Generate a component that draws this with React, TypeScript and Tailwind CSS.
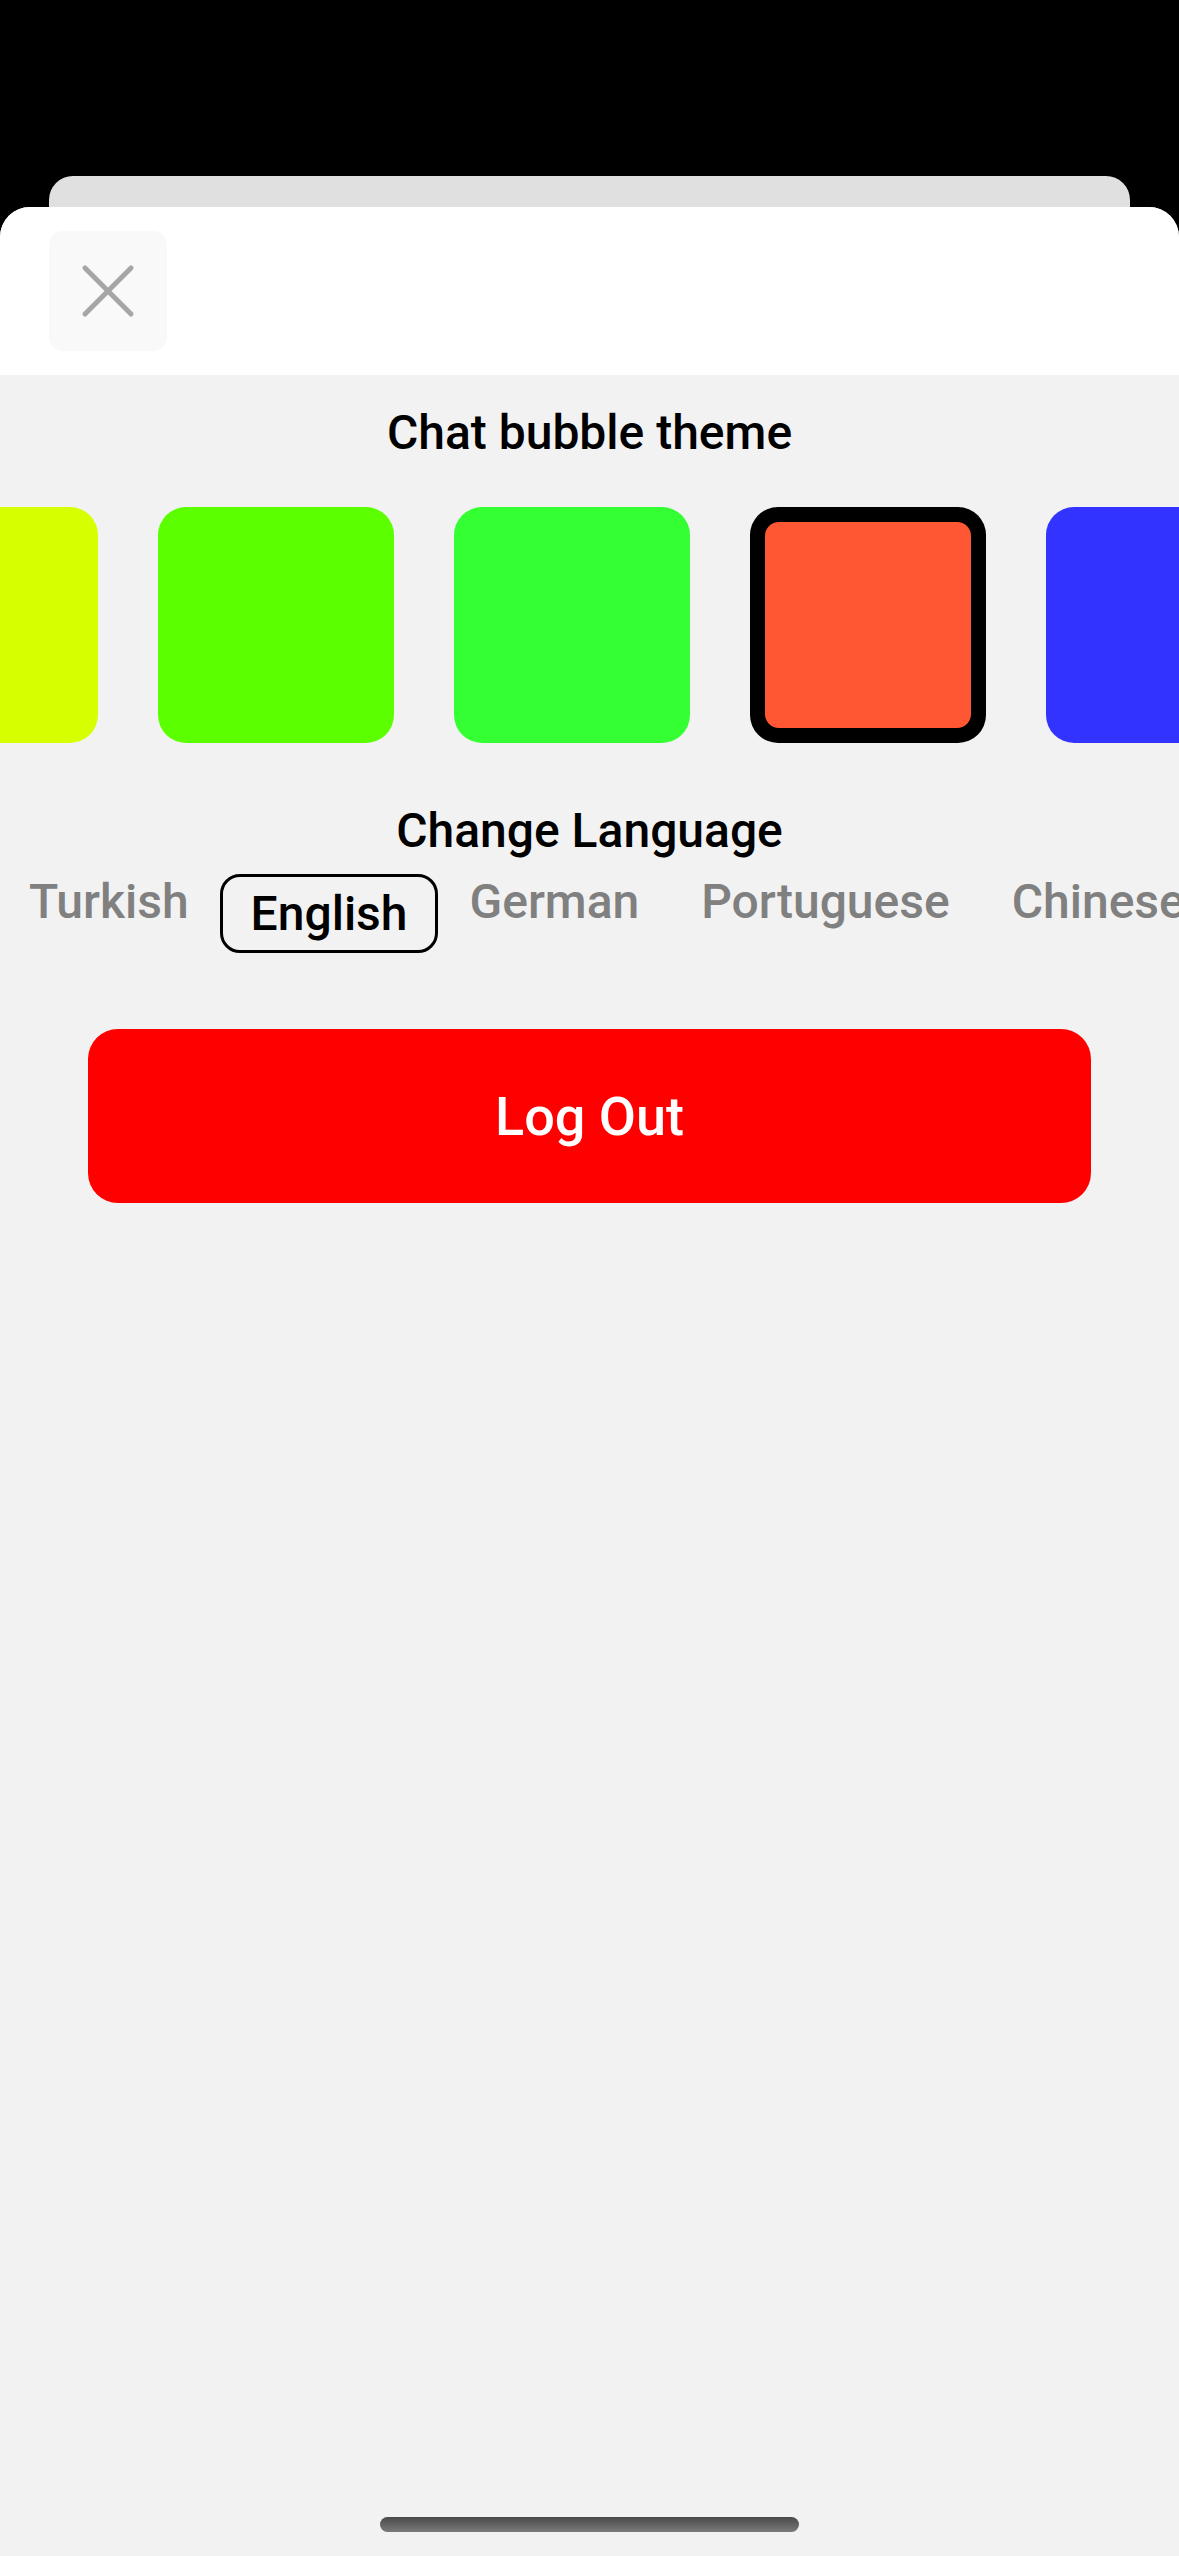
import React from 'react';

const swatches = ['#d6ff00', '#5cff00', '#33ff33', '#ff5733', '#3333ff'];
const selectedSwatch = 3;

const languages = ['Turkish', 'English', 'German', 'Portuguese', 'Chinese'];
const selectedLanguage = 'English';

function CloseIcon() {
  return (
    <svg width="56" height="56" viewBox="0 0 56 56" fill="none" aria-hidden>
      <path
        d="M5 5 L51 51 M51 5 L5 51"
        stroke="#a6a6a6"
        strokeWidth="5"
        strokeLinecap="round"
      />
    </svg>
  );
}

export default function App() {
  return (
    <div
      className="w-[1179px] h-[2556px] bg-black flex flex-col overflow-hidden"
      style={{ fontFamily: 'Roboto, "Noto Sans", sans-serif' }}
    >
      {/* status bar area */}
      <div className="h-[176px] shrink-0" />

      {/* stacked sheet behind */}
      <div className="mx-[49px] h-[31px] shrink-0 rounded-t-[24px] bg-[#e0e0e0]" />

      {/* sheet */}
      <div className="flex-1 flex flex-col rounded-t-[30px] overflow-hidden bg-[#f2f2f2]">
        <div className="h-[168px] shrink-0 bg-white pl-[49px] pt-[24px]">
          <button className="w-[118px] h-[120px] rounded-[14px] bg-[#f9f9f9] flex items-center justify-center">
            <CloseIcon />
          </button>
        </div>

        <h2 className="mt-[30px] text-center text-[48px] leading-[56px] font-medium text-black">
          Chat bubble theme
        </h2>

        <div className="mt-[46px] overflow-hidden">
          <div className="flex gap-[60px] -ml-[138px]">
            {swatches.map((color, index) =>
              index === selectedSwatch ? (
                <div
                  key={color}
                  className="w-[236px] h-[236px] shrink-0 rounded-[28px] bg-black p-[15px]"
                >
                  <div
                    className="w-full h-full rounded-[14px]"
                    style={{ backgroundColor: color }}
                  />
                </div>
              ) : (
                <div
                  key={color}
                  className="w-[236px] h-[236px] shrink-0 rounded-[28px]"
                  style={{ backgroundColor: color }}
                />
              ),
            )}
          </div>
        </div>

        <h2 className="mt-[60px] text-center text-[48px] leading-[56px] font-medium text-black">
          Change Language
        </h2>

        <div className="mt-[15px] overflow-hidden">
          <div className="flex items-start -ml-[2px] whitespace-nowrap">
            {languages.map((lang) =>
              lang === selectedLanguage ? (
                <div
                  key={lang}
                  className="h-[79px] px-[28px] flex items-center rounded-[20px] border-[3px] border-black text-[48px] leading-[56px] font-medium text-black"
                >
                  {lang}
                </div>
              ) : (
                <div
                  key={lang}
                  className="px-[31px] text-[48px] leading-[56px] font-medium text-[#808080]"
                >
                  {lang}
                </div>
              ),
            )}
          </div>
        </div>

        <button className="mt-[76px] mx-[88px] h-[174px] rounded-[30px] bg-[#ff0000] text-white text-[54px] font-medium">
          Log Out
        </button>

        <div className="mt-auto mb-[24px] mx-auto w-[419px] h-[15px] rounded-full bg-gradient-to-b from-[#4a4a4a] to-[#7a7a7a]" />
      </div>
    </div>
  );
}
